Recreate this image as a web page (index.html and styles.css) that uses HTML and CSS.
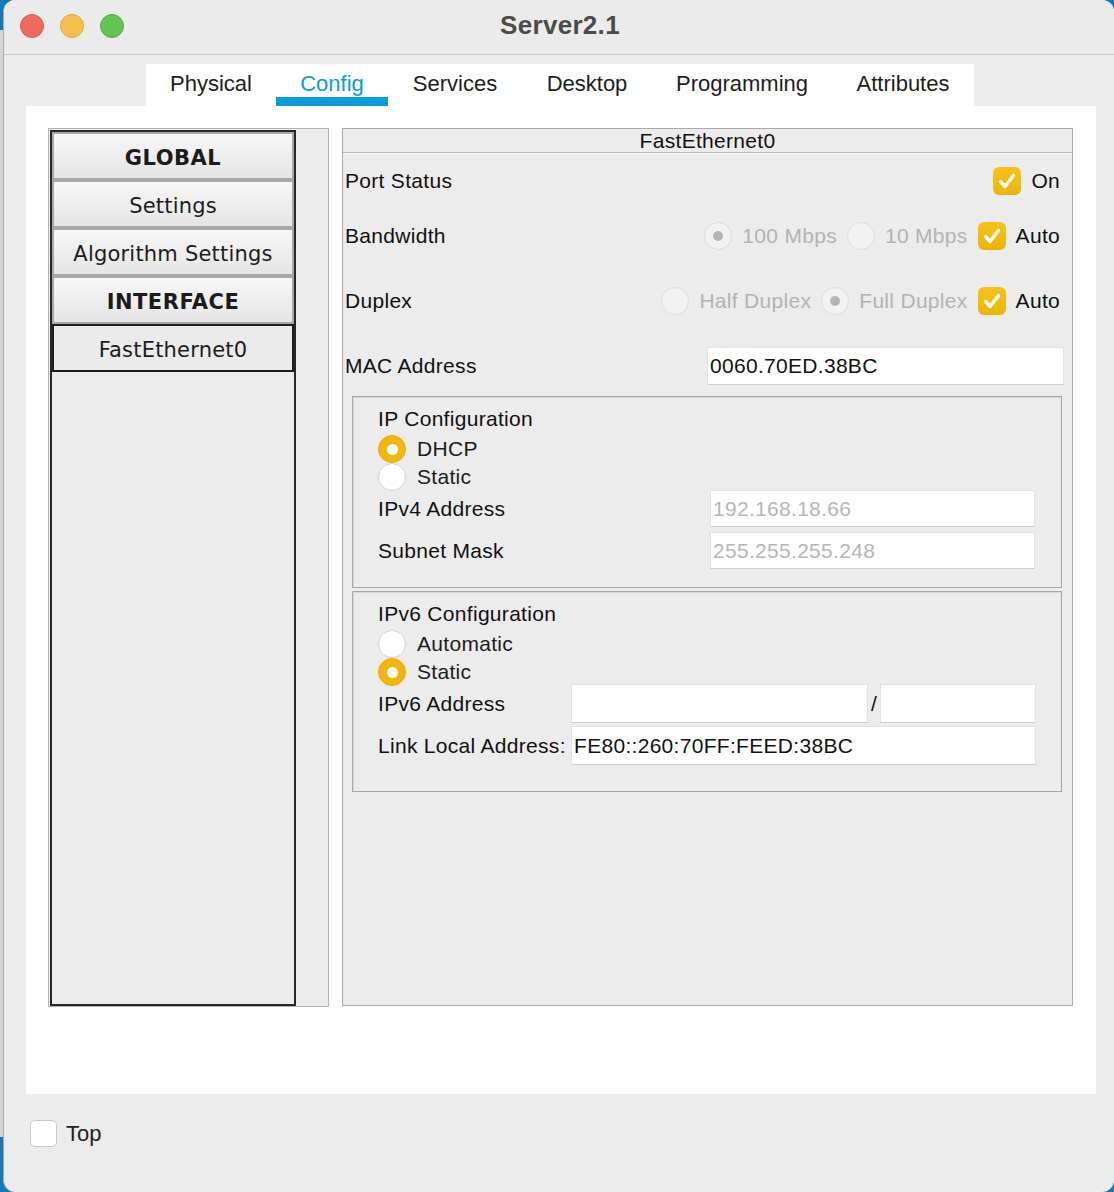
FILE: index.html
```html
<!DOCTYPE html>
<html>
<head>
<meta charset="utf-8">
<title>Server2.1</title>
<link rel="stylesheet" href="styles.css">
</head>
<body>
<div class="window">
  <div class="titlebar">
    <div class="lights">
      <span class="light red"></span>
      <span class="light yellow"></span>
      <span class="light green"></span>
    </div>
    <div class="title">Server2.1</div>
    <div></div>
  </div>
  <div class="main">
    <div class="tabs">
      <div class="tab w-physical">Physical</div>
      <div class="tab w-config active">Config</div>
      <div class="tab w-services">Services</div>
      <div class="tab w-desktop">Desktop</div>
      <div class="tab w-programming">Programming</div>
      <div class="tab w-attributes">Attributes</div>
    </div>
    <div class="content">
      <div class="sidebar">
        <div class="list">
          <div class="item strong">GLOBAL</div>
          <div class="item">Settings</div>
          <div class="item">Algorithm Settings</div>
          <div class="item strong">INTERFACE</div>
          <div class="item selected">FastEthernet0</div>
        </div>
      </div>
      <div class="panel">
        <div class="panel-head">FastEthernet0</div>
        <div class="row r1">
          <span class="label">Port Status</span>
          <div class="controls">
            <span class="opt"><span class="check"><svg viewBox="0 0 28 28" width="28" height="28"><polyline points="7.5,14.5 12,19.5 20.5,8.5" fill="none" stroke="#fff" stroke-width="3.4" stroke-linecap="round" stroke-linejoin="round"/></svg></span>On</span>
          </div>
        </div>
        <div class="row r2">
          <span class="label">Bandwidth</span>
          <div class="controls">
            <span class="opt dis"><span class="radio disabled on"></span>100 Mbps</span>
            <span class="opt dis"><span class="radio disabled"></span>10 Mbps</span>
            <span class="opt"><span class="check"><svg viewBox="0 0 28 28" width="28" height="28"><polyline points="7.5,14.5 12,19.5 20.5,8.5" fill="none" stroke="#fff" stroke-width="3.4" stroke-linecap="round" stroke-linejoin="round"/></svg></span>Auto</span>
          </div>
        </div>
        <div class="row r3">
          <span class="label">Duplex</span>
          <div class="controls">
            <span class="opt dis"><span class="radio disabled"></span>Half Duplex</span>
            <span class="opt dis"><span class="radio disabled on"></span>Full Duplex</span>
            <span class="opt"><span class="check"><svg viewBox="0 0 28 28" width="28" height="28"><polyline points="7.5,14.5 12,19.5 20.5,8.5" fill="none" stroke="#fff" stroke-width="3.4" stroke-linecap="round" stroke-linejoin="round"/></svg></span>Auto</span>
          </div>
        </div>
        <div class="row r4">
          <span class="label">MAC Address</span>
          <div class="field mac">0060.70ED.38BC</div>
        </div>

        <div class="group ipv4">
          <div class="group-title">IP Configuration</div>
          <div class="radio-row"><span class="radio sel"></span>DHCP</div>
          <div class="radio-row"><span class="radio"></span>Static</div>
          <div class="frow first v4">
            <span class="label">IPv4 Address</span>
            <div class="field dim">192.168.18.66</div>
          </div>
          <div class="frow v4">
            <span class="label">Subnet Mask</span>
            <div class="field dim">255.255.255.248</div>
          </div>
        </div>

        <div class="group ipv6">
          <div class="group-title">IPv6 Configuration</div>
          <div class="radio-row"><span class="radio"></span>Automatic</div>
          <div class="radio-row"><span class="radio sel"></span>Static</div>
          <div class="frow first v6a">
            <span class="label">IPv6 Address</span>
            <div class="field"></div>
            <span class="slash">/</span>
            <div class="field"></div>
          </div>
          <div class="frow v6b">
            <span class="label">Link Local Address:</span>
            <div class="field">FE80::260:70FF:FEED:38BC</div>
          </div>
        </div>
      </div>
    </div>
    <div class="footer">
      <span class="box"></span>
      <span class="top-label">Top</span>
    </div>
  </div>
</div>
</body>
</html>
```

FILE: styles.css
```css
* { box-sizing: border-box; }

html, body {
  margin: 0;
  height: 1192px;
  overflow: hidden;
}

body {
  background: linear-gradient(#1479b8 0, #1479b8 30px, #d5d5d5 30px, #d5d5d5 1137px, #1479b8 1137px);
  font-family: "Liberation Sans", Arial, sans-serif;
  color: #111;
}

.window {
  margin-left: 3px;
  width: 1111px;
  height: 1192px;
  background: #ececec;
  border-left: 1px solid #a9a9a9;
  border-radius: 12px;
  overflow: hidden;
}

/* title bar */
.titlebar {
  height: 55px;
  border-bottom: 1px solid #c6c6c6;
  display: grid;
  grid-template-columns: 1fr auto 1fr;
  align-items: center;
  background: #ebebeb;
}
.lights {
  display: flex;
  gap: 16px;
  padding-left: 16px;
  padding-bottom: 3px;
}
.light {
  width: 24px;
  height: 24px;
  border-radius: 50%;
  display: block;
}
.red { background: #ee6a5f; border: 1px solid #d85a4f; }
.yellow { background: #f5be4f; border: 1px solid #dea63c; }
.green { background: #62c554; border: 1px solid #53ad45; }
.title {
  font-weight: bold;
  font-size: 26px;
  letter-spacing: 0.3px;
  color: #4b4b4b;
  padding-bottom: 4px;
  padding-left: 2px;
}

/* main area */
.main {
  padding: 9px 18px 0 22px;
}
.tabs {
  margin-left: 120px;
  width: 828px;
  height: 42px;
  background: #fff;
  display: flex;
}
.tab {
  height: 42px;
  line-height: 40px;
  text-align: center;
  font-size: 22px;
  color: #1d1d1d;
}
.tab.active {
  color: #0b9bd8;
  box-shadow: inset 0 -9px 0 #0a9cd8;
}
.w-physical { width: 130px; }
.w-config { width: 112px; }
.w-services { width: 134px; }
.w-desktop { width: 130px; }
.w-programming { width: 180px; }
.w-attributes { width: 142px; }

.content {
  background: #fff;
  height: 988px;
  padding: 22px 0 0 22px;
  display: flex;
  gap: 13px;
  align-items: flex-start;
}

/* sidebar */
.sidebar {
  width: 281px;
  height: 879px;
  border: 1px solid #b3b3b3;
  background: #ececec;
  padding: 1px 32px 0 1px;
}
.list {
  height: 100%;
  border: 2px solid #272727;
  background: #ececec;
}
.item {
  height: 48px;
  border: 2px solid #a8a8a8;
  background: linear-gradient(#f7f7f7, #e5e5e5);
  font-family: "DejaVu Sans", Verdana, sans-serif;
  font-size: 21px;
  letter-spacing: 0.2px;
  color: #1c1c1c;
  display: flex;
  align-items: center;
  justify-content: center;
  padding-top: 3px;
}
.item.strong {
  font-weight: bold;
  letter-spacing: 0.5px;
}
.item.selected {
  border-color: #1e1e1e;
  background: #ebebeb;
}

/* right panel */
.panel {
  width: 731px;
  height: 878px;
  border: 1px solid #a9a9a9;
  background: #ececec;
}
.panel-head {
  height: 24px;
  line-height: 23px;
  text-align: center;
  font-size: 21px;
  letter-spacing: 0.3px;
  border-bottom: 1px solid #b8b8b8;
  box-shadow: 0 1px 0 #f8f8f8;
}
.row {
  display: flex;
  align-items: center;
  padding: 0 12px 0 2px;
  font-size: 21px;
  letter-spacing: 0.3px;
}
.r1 { height: 56px; }
.r2 { height: 54px; }
.r3 { height: 76px; }
.r4 { height: 54px; padding-right: 8px; }

.controls {
  margin-left: auto;
  display: flex;
  align-items: center;
  gap: 10px;
}
.opt {
  display: flex;
  align-items: center;
  gap: 10px;
  color: #111;
}
.opt.dis { color: #b3b3b3; }

.check {
  width: 28px;
  height: 28px;
  border-radius: 6px;
  background: linear-gradient(#f6c21c, #ecb405);
  display: block;
}
.check svg { display: block; }

.radio {
  width: 28px;
  height: 28px;
  border-radius: 50%;
  background: #fff;
  border: 1px solid #d2d2d2;
  display: flex;
  align-items: center;
  justify-content: center;
  flex: none;
}
.radio.disabled {
  background: #f2f2f2;
  border-color: #dcdcdc;
}
.radio.disabled.on::after {
  content: "";
  width: 10px;
  height: 10px;
  border-radius: 50%;
  background: #b4b4b4;
}
.radio.sel {
  background: #f0b80a;
  border-color: #e8ae06;
}
.radio.sel::after {
  content: "";
  width: 11px;
  height: 11px;
  border-radius: 50%;
  background: #fff;
}

.field {
  background: #fff;
  border: 1px solid #e2e2e2;
  border-bottom-color: #cdcdcd;
  font-size: 21px;
  letter-spacing: 0.3px;
  padding-left: 2px;
  display: flex;
  align-items: center;
  color: #111;
}
.field.dim { color: #b6b6b6; }
.field.mac {
  margin-left: auto;
  width: 357px;
  height: 38px;
}

/* groups */
.group {
  margin: 3px 10px 0 9px;
  border: 1px solid #a7a7a7;
  box-shadow: inset 1px 1px 0 #d8d8d8;
  padding: 10px 0 0 25px;
  font-size: 21px;
  letter-spacing: 0.3px;
}
.ipv4 { height: 192px; }
.ipv6 { height: 201px; }
.group-title {
  line-height: 24px;
  height: 24px;
  margin-bottom: 4px;
}
.radio-row {
  height: 28px;
  display: flex;
  align-items: center;
  gap: 11px;
  color: #1c1c1c;
}
.frow {
  display: grid;
  align-items: center;
}
.frow.v4 {
  grid-template-columns: 332px 325px;
  height: 37px;
  margin-top: 5px;
}
.frow.v4.first { margin-top: -1px; }
.frow.v4 .field { height: 37px; }

.frow.v6a {
  grid-template-columns: 193px 297px 12px 156px;
  height: 39px;
  margin-top: -2px;
}
.frow.v6b {
  grid-template-columns: 193px 465px;
  height: 39px;
  margin-top: 3px;
}
.frow.v6a .field, .frow.v6b .field { height: 39px; }
.slash {
  padding-left: 3px;
  font-size: 21px;
}

/* footer */
.footer {
  height: 98px;
  padding: 26px 0 0 4px;
  display: flex;
  align-items: flex-start;
  gap: 9px;
}
.box {
  width: 27px;
  height: 27px;
  background: #fff;
  border: 1px solid #c8c8c8;
  border-radius: 5px;
  display: block;
}
.top-label {
  font-size: 22px;
  line-height: 27px;
  color: #222;
}
```
